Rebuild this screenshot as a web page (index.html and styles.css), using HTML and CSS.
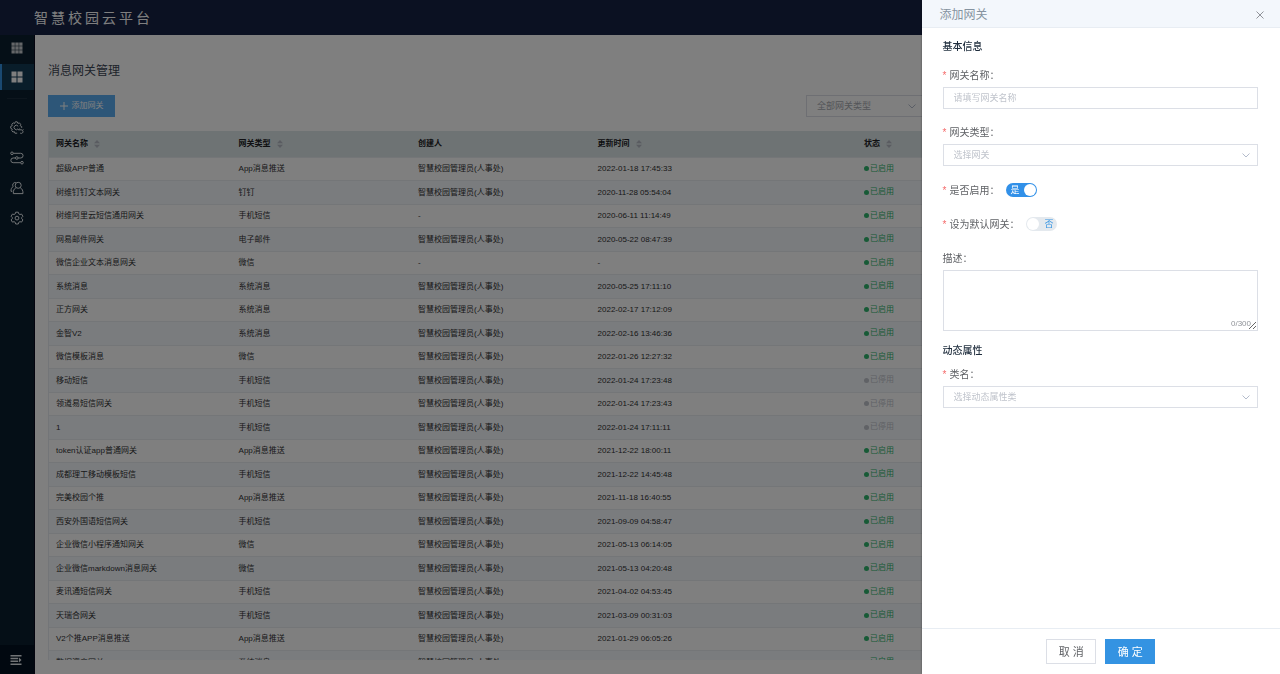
FILE: index.html
```
<!DOCTYPE html>
<html lang="zh-CN">
<head>
<meta charset="utf-8">
<title>消息网关管理</title>
<link rel="stylesheet" href="styles.css">
</head>
<body>
<div class="app">
  <header class="topbar"><span class="brand">智慧校园云平台</span></header>
  <div class="shell">
    <nav class="sidebar" aria-label="主导航">
      <a class="nav-item nav-item-first" href="#" aria-label="应用"><svg viewBox="0 0 12 12" fill="currentColor"><path d="M.5.5h3.300v3.300H.5zM4.300.5h3.400v3.300H4.300zM8.200.5h3.300v3.300H8.200zM.5 4.300h3.300v3.400H.5zM4.300 4.300h3.400v3.400H4.300zM8.200 4.300h3.300v3.400H8.200zM.5 8.200h3.300v3.300H.5zM4.300 8.200h3.400v3.300H4.300zM8.200 8.200h3.300v3.300H8.200z"/></svg></a>
      <a class="nav-item nav-item-active" href="#" aria-label="工作台"><svg viewBox="0 0 12 12" fill="currentColor"><path d="M.5.5h5v5h-5zM6.500.5h5v5h-5zM.5 6.500h5v5h-5zM6.500 6.500h5v5h-5z"/></svg></a>
      <hr class="nav-rule">
      <a class="nav-item nav-item-line" href="#" aria-label="服务配置"><svg viewBox="0 0 14 14"><path d="M7.200 12.200H4.900l-.5-1.500-1.500.3-1.200-1.600.6-1.200L.7 7.200V5.400l1.500-.6-.4-1.600 1.500-1.300 1.300.6L5.300.8h1.900l.7 1.600 1.500-.5 1.300 1.400-.5 1.400 1.500.8v1.400M8.200 5.400a2.200 2.200 0 1 0-.2 2.400"/><path d="M8.300 8.800h2.900a1.800 1.800 0 1 1-1.100 3.200M8.300 8.800 9.600 7.500M13.300 8.400l-.8.9"/></svg></a>
      <a class="nav-item nav-item-line" href="#" aria-label="流程"><svg viewBox="0 0 14 14"><circle cx="2" cy="2.300" r="1.300"/><circle cx="6.800" cy="7" r="1.300"/><circle cx="12" cy="11.700" r="1.300"/><path d="M3.300 2.300h7.400a2.350 2.350 0 0 1 0 4.700H8.100M5.500 7H3.200a2.350 2.350 0 0 0 0 4.700h7.500"/></svg></a>
      <a class="nav-item nav-item-line" href="#" aria-label="用户"><svg viewBox="0 0 14 14"><circle cx="8.200" cy="4.300" r="3"/><path d="M5.900 6.800c-2 1.100-2.600 2.700-2.600 5.800h9.700c0-3.100-.7-4.700-2.700-5.800M5.800 1.500a2.600 2.600 0 0 0-2.600 4.100C1.500 6.600 1 7.800 1 10.300h1.300"/></svg></a>
      <a class="nav-item nav-item-line" href="#" aria-label="设置"><svg viewBox="0 0 14 14"><path d="M5.700 1.200h2.600l.5 1.700 1.100.6 1.700-.4 1.300 2.200L11.700 6.500v1.200l1.200 1.200-1.300 2.200-1.700-.4-1.100.6-.5 1.700H5.700l-.5-1.700-1.100-.6-1.700.4-1.300-2.200 1.200-1.200V6.500L1.100 5.300l1.300-2.200 1.700.4 1.100-.6z"/><circle cx="7" cy="7.100" r="1.900"/></svg></a>
      <button class="collapse" type="button" aria-label="收起菜单"><svg viewBox="0 0 12 12" fill="currentColor"><path d="M.5 1h11v1.500H.5zM.5 3.800h7.700v1.500H.5zM.5 6.600h7.700v1.500H.5zM.5 9.400h11v1.500H.5zM9 3.400l2.500 2.500L9 8.400z"/></svg></button>
    </nav>
    <main class="content">
      <h1 class="page-title">消息网关管理</h1>
      <div class="toolbar">
        <button class="add-button" type="button"><svg viewBox="0 0 8 8"><path d="M4 0v8M0 4h8"/></svg><span>添加网关</span></button>
        <div class="select-box filter">
          <select aria-label="网关类型筛选"><option>全部网关类型</option></select>
          <svg class="chevron" viewBox="0 0 8 8"><path d="M.5 2.500 4 6l3.500-3.500"/></svg>
        </div>
      </div>
      <div class="table-wrap">
        <table class="gateways">
          <colgroup><col class="col-name"><col class="col-type"><col class="col-owner"><col class="col-time"><col></colgroup>
          <thead><tr>
            <th>网关名称<svg class="sort" viewBox="0 0 6 8"><path d="M0 3.300 3 0l3 3.300zM0 4.700 3 8l3-3.300z"/></svg></th>
            <th>网关类型<svg class="sort" viewBox="0 0 6 8"><path d="M0 3.300 3 0l3 3.300zM0 4.700 3 8l3-3.300z"/></svg></th>
            <th>创建人</th>
            <th>更新时间<svg class="sort" viewBox="0 0 6 8"><path d="M0 3.300 3 0l3 3.300zM0 4.700 3 8l3-3.300z"/></svg></th>
            <th>状态<svg class="sort" viewBox="0 0 6 8"><path d="M0 3.300 3 0l3 3.300zM0 4.700 3 8l3-3.300z"/></svg></th>
          </tr></thead>
          <tbody>
            <tr><td>超级APP普通</td><td>App消息推送</td><td>智慧校园管理员(人事处)</td><td>2022-01-18 17:45:33</td><td><span class="status">已启用</span></td></tr>
            <tr><td>树维钉钉文本网关</td><td>钉钉</td><td>智慧校园管理员(人事处)</td><td>2020-11-28 05:54:04</td><td><span class="status">已启用</span></td></tr>
            <tr><td>树维阿里云短信通用网关</td><td>手机短信</td><td>-</td><td>2020-06-11 11:14:49</td><td><span class="status">已启用</span></td></tr>
            <tr><td>网易邮件网关</td><td>电子邮件</td><td>智慧校园管理员(人事处)</td><td>2020-05-22 08:47:39</td><td><span class="status">已启用</span></td></tr>
            <tr><td>微信企业文本消息网关</td><td>微信</td><td>-</td><td>-</td><td><span class="status">已启用</span></td></tr>
            <tr><td>系统消息</td><td>系统消息</td><td>智慧校园管理员(人事处)</td><td>2020-05-25 17:11:10</td><td><span class="status">已启用</span></td></tr>
            <tr><td>正方网关</td><td>系统消息</td><td>智慧校园管理员(人事处)</td><td>2022-02-17 17:12:09</td><td><span class="status">已启用</span></td></tr>
            <tr><td>金智V2</td><td>系统消息</td><td>智慧校园管理员(人事处)</td><td>2022-02-16 13:46:36</td><td><span class="status">已启用</span></td></tr>
            <tr><td>微信模板消息</td><td>微信</td><td>智慧校园管理员(人事处)</td><td>2022-01-26 12:27:32</td><td><span class="status">已启用</span></td></tr>
            <tr><td>移动短信</td><td>手机短信</td><td>智慧校园管理员(人事处)</td><td>2022-01-24 17:23:48</td><td><span class="status status-off">已停用</span></td></tr>
            <tr><td>领道易短信网关</td><td>手机短信</td><td>智慧校园管理员(人事处)</td><td>2022-01-24 17:23:43</td><td><span class="status status-off">已停用</span></td></tr>
            <tr><td>1</td><td>手机短信</td><td>智慧校园管理员(人事处)</td><td>2022-01-24 17:11:11</td><td><span class="status status-off">已停用</span></td></tr>
            <tr><td>token认证app普通网关</td><td>App消息推送</td><td>智慧校园管理员(人事处)</td><td>2021-12-22 18:00:11</td><td><span class="status">已启用</span></td></tr>
            <tr><td>成都理工移动模板短信</td><td>手机短信</td><td>智慧校园管理员(人事处)</td><td>2021-12-22 14:45:48</td><td><span class="status">已启用</span></td></tr>
            <tr><td>完美校园个推</td><td>App消息推送</td><td>智慧校园管理员(人事处)</td><td>2021-11-18 16:40:55</td><td><span class="status">已启用</span></td></tr>
            <tr><td>西安外国语短信网关</td><td>手机短信</td><td>智慧校园管理员(人事处)</td><td>2021-09-09 04:58:47</td><td><span class="status">已启用</span></td></tr>
            <tr><td>企业微信小程序通知网关</td><td>微信</td><td>智慧校园管理员(人事处)</td><td>2021-05-13 06:14:05</td><td><span class="status">已启用</span></td></tr>
            <tr><td>企业微信markdown消息网关</td><td>微信</td><td>智慧校园管理员(人事处)</td><td>2021-05-13 04:20:48</td><td><span class="status">已启用</span></td></tr>
            <tr><td>麦讯通短信网关</td><td>手机短信</td><td>智慧校园管理员(人事处)</td><td>2021-04-02 04:53:45</td><td><span class="status">已启用</span></td></tr>
            <tr><td>天瑞合网关</td><td>手机短信</td><td>智慧校园管理员(人事处)</td><td>2021-03-09 00:31:03</td><td><span class="status">已启用</span></td></tr>
            <tr><td>V2个推APP消息推送</td><td>App消息推送</td><td>智慧校园管理员(人事处)</td><td>2021-01-29 06:05:26</td><td><span class="status">已启用</span></td></tr>
            <tr><td>数据资产网关</td><td>系统消息</td><td>智慧校园管理员(人事处)</td><td>2020-12-08 04:50:06</td><td><span class="status">已启用</span></td></tr>
          </tbody>
        </table>
      </div>
    </main>
  </div>
</div>
<div class="mask"></div>
<form class="drawer" role="dialog" aria-labelledby="drawer-title">
  <header class="drawer-head">
    <h2 id="drawer-title">添加网关</h2>
    <button class="close" type="button" aria-label="关闭"><svg viewBox="0 0 8 8"><path d="M.5.5l7 7M7.500.5l-7 7"/></svg></button>
  </header>
  <div class="drawer-body">
    <h3 class="section-title">基本信息</h3>
    <div class="field">
      <label class="required" for="name">网关名称：</label>
      <input class="text-input" id="name" type="text" placeholder="请填写网关名称">
    </div>
    <div class="field">
      <label class="required" for="type">网关类型：</label>
      <div class="select-box">
        <select id="type"><option>选择网关</option></select>
        <svg class="chevron" viewBox="0 0 8 8"><path d="M.5 2.500 4 6l3.500-3.500"/></svg>
      </div>
    </div>
    <div class="field-inline">
      <label class="required" for="enabled">是否启用：</label>
      <span class="switch"><input id="enabled" type="checkbox" role="switch" checked><span class="switch-text">是</span></span>
    </div>
    <div class="field-inline">
      <label class="required" for="default">设为默认网关：</label>
      <span class="switch switch-off"><input id="default" type="checkbox" role="switch"><span class="switch-text">否</span></span>
    </div>
    <div class="field field-desc">
      <label for="desc">描述：</label>
      <div class="textarea-box"><textarea id="desc" maxlength="300"></textarea><span class="count">0/300</span></div>
    </div>
    <h3 class="section-title">动态属性</h3>
    <div class="field field-class">
      <label class="required" for="class">类名：</label>
      <div class="select-box">
        <select id="class"><option>选择动态属性类</option></select>
        <svg class="chevron" viewBox="0 0 8 8"><path d="M.5 2.500 4 6l3.500-3.500"/></svg>
      </div>
    </div>
  </div>
  <footer class="drawer-foot">
    <button class="btn" type="button">取 消</button>
    <button class="btn btn-primary" type="submit">确 定</button>
  </footer>
</form>
</body>
</html>
```
FILE: styles.css
```
* { box-sizing: border-box; }
body { margin: 0; font-family: "Liberation Sans", "Noto Sans CJK SC", sans-serif; font-size: 8px; color: #303133; }
button, input, select, textarea { font: inherit; color: inherit; margin: 0; border-radius: 0; }
button { cursor: pointer; padding: 0; }
svg { display: block; fill: none; stroke: currentColor; }
svg[fill="currentColor"] { fill: currentColor; stroke: none; }
h1, h2, h3 { margin: 0; font-weight: 400; }

.app { display: flex; flex-direction: column; height: 100vh; background: #fff; overflow: hidden; }
.topbar { display: flex; align-items: center; flex: none; height: 35px; padding-left: 34px; background: #162244; color: #fff; }
.brand { font-size: 14px; line-height: 20px; letter-spacing: 3px; }
.shell { display: flex; flex: 1; min-height: 0; }
.sidebar { display: flex; flex-direction: column; flex: none; width: 35px; background: #0a1f2f; color: #e4e8ec; border-right: 1px solid #08081c; }
.nav-item { display: flex; align-items: center; justify-content: center; height: 26px; margin-bottom: 4px; color: inherit; border-left: 2px solid transparent; padding-right: 2px; }
.nav-item svg { width: 12px; height: 12px; }
.nav-item-first { height: 25px; color: #c8ccd0; }
.nav-item-active { background: #133a54; border-left-color: #3493e2; color: #fff; }
.nav-item-line svg { width: 14px; height: 14px; }
.nav-rule { width: 20px; margin: 4px auto 16px; border: 0; border-top: 1px solid #1a2d3d; }
.collapse { display: flex; align-items: center; justify-content: center; height: 29px; margin-top: auto; padding-right: 2px; border: 0; background: #031120; color: #e4e8ec; }
.collapse svg { width: 12px; height: 12px; }

.content { display: flex; flex-direction: column; flex: 1; min-width: 0; padding: 26px 14px 14px 13px; }
.page-title { font-size: 12px; line-height: 20px; color: #3c4654; }
.toolbar { display: flex; align-items: center; justify-content: space-between; height: 22px; margin: 14px 0; }
.add-button { display: flex; align-items: center; justify-content: center; gap: 4px; width: 67px; height: 22px; padding-bottom: 1px; border: 0; background: #5badf0; color: #fff; line-height: 12px; }
.add-button svg { width: 8px; height: 8px; }
.filter { width: 118px; margin-right: 342px; }
.table-wrap { flex: 1; min-height: 0; overflow: hidden; border-left: 1px solid #e6ebf0; }
.gateways { width: 100%; table-layout: fixed; border-collapse: separate; border-spacing: 0; }
.col-name { width: 15%; }
.col-type, .col-owner { width: 14.75%; }
.col-time { width: 21.9%; }
.gateways th, .gateways td { padding: 0 7px; text-align: left; vertical-align: middle; white-space: nowrap; line-height: 12px; border-bottom: 1px solid #e9edf1; }
.gateways th { height: 27px; background: #dce6e8; color: #202124; font-weight: 700; }
.gateways td { height: 23px; }
.gateways tr:nth-child(even) td { height: 24px; background: #f5f8fc; }
.sort { display: inline-block; width: 6px; height: 8px; margin-left: 6px; vertical-align: middle; fill: #b4b9c2; stroke: none; }
.status { display: inline-flex; align-items: center; vertical-align: middle; color: #2fb56d; }
.status::before { content: ""; width: 5px; height: 5px; margin-right: 1px; border-radius: 50%; background: currentColor; }
.status-off { color: #c0c4cc; }

.mask { position: fixed; inset: 0; background: rgba(0, 0, 0, .5); }
.drawer { position: fixed; top: 0; right: 0; bottom: 0; display: flex; flex-direction: column; width: 28vw; min-width: 320px; background: #fff; box-shadow: 0 0 2px rgba(0, 0, 0, .4); font-size: 10px; color: #606266; }
.drawer-head { display: flex; align-items: center; justify-content: space-between; flex: none; height: 28px; padding: 0 16px 0 18px; background: #f3f7fc; border-bottom: 1px solid #e8edf3; }
.drawer-head h2 { font-size: 12px; color: #8593a0; }
.close { display: flex; margin-top: 2px; border: 0; background: none; color: #909399; }
.close svg { width: 8px; height: 8px; }
.drawer-body { flex: 1; min-height: 0; padding: 11px 22px 0 21px; overflow: hidden; }
.section-title { font-size: 10px; line-height: 15px; color: #1f2d3d; font-weight: 500; }
.field { display: flex; flex-direction: column; margin-top: 13px; }
.field + .field { margin-top: 15px; }
.field label, .field-inline label { line-height: 17px; margin-bottom: 3px; }
.required::before { content: "*"; margin-right: 3px; color: #f56c6c; }
.text-input, .select-box select { display: block; width: 100%; height: 22px; padding: 0 10px 1px; border: 1px solid #dcdfe6; background: #fff; font-size: 9px; outline: 0; }
.text-input::placeholder { color: #c0c4cc; opacity: 1; }
.select-box { position: relative; }
.select-box select { appearance: none; color: #c0c4cc; }
.chevron { position: absolute; top: 7px; right: 8px; width: 8px; height: 8px; color: #b4bccc; pointer-events: none; }
.filter select { border-color: #dcdfe6; color: #a8abb2; }
.field-inline { display: flex; align-items: center; gap: 6px; height: 18px; margin-top: 16px; }
.field + .field-inline { margin-top: 15px; }
.field-inline label { margin: 0; }
.switch { position: relative; display: flex; align-items: center; width: 31px; height: 14px; color: #fff; font-size: 9px; }
.switch input { appearance: none; width: 100%; height: 100%; border-radius: 7px; background: #3190e8; cursor: pointer; }
.switch input::before { content: ""; display: block; width: 12px; height: 12px; margin: 1px 1px 1px auto; border-radius: 50%; background: #fff; }
.switch-text { position: absolute; left: 5px; line-height: 14px; pointer-events: none; }
.switch-off { color: #3493e2; }
.switch-off input { background: #e4e9ee; }
.switch-off input::before { margin-left: 1px; }
.switch-off .switch-text { left: auto; right: 3px; }
.field-desc { margin: 17px 0 12px; }
.textarea-box { position: relative; display: flex; }
.textarea-box textarea { width: 100%; height: 61px; padding: 4px 10px; border: 1px solid #dcdfe6; background: #fff; resize: vertical; outline: 0; }
.count { position: absolute; right: 7px; bottom: 2px; font-size: 8px; line-height: 10px; color: #909399; }
.field-class { margin-top: 8px; }
.drawer-foot { display: flex; align-items: flex-start; justify-content: center; gap: 9px; flex: none; height: 46px; padding-top: 10px; border-top: 1px solid #e8edf3; }
.btn { width: 50px; height: 25px; padding-bottom: 2px; border: 1px solid #dcdfe6; background: #fff; font-size: 11px; color: #606266; }
.btn-primary { background: #3493e2; border-color: #3493e2; color: #fff; }
```
